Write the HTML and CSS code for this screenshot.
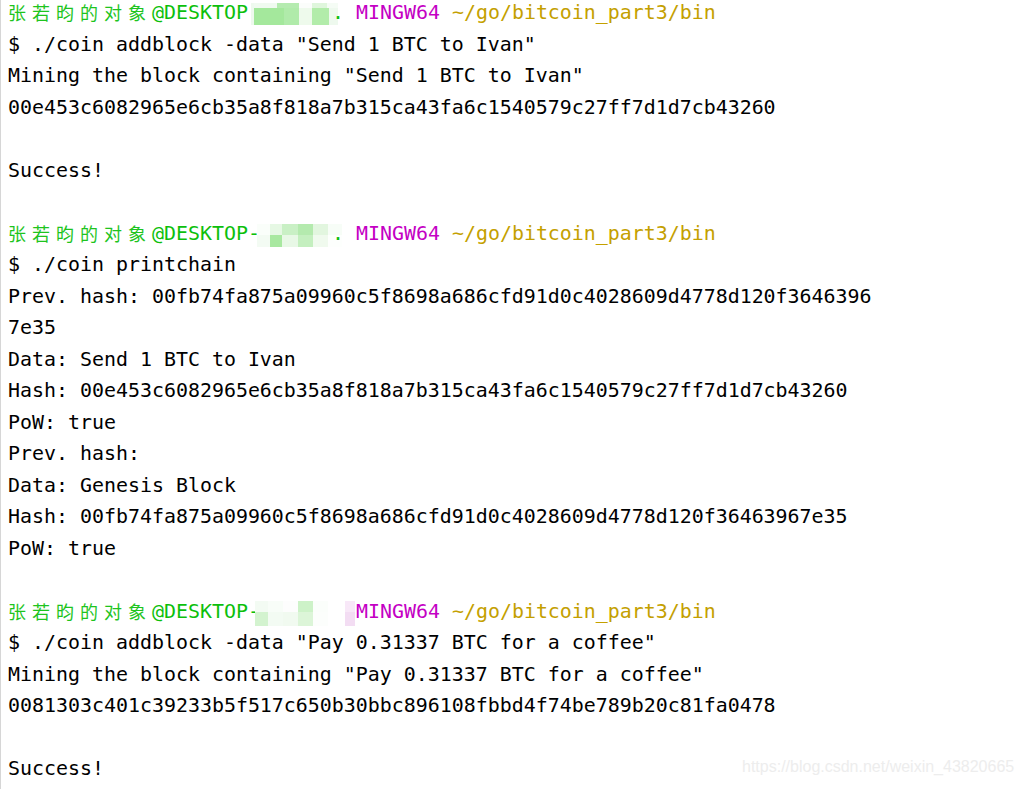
FILE: index.html
```html
<!DOCTYPE html>
<html lang="zh">
<head>
<meta charset="utf-8">
<title>MINGW64 terminal</title>
<link rel="stylesheet" href="styles.css">
</head>
<body>
<div class="term">
<pre class="out"><span class="user">张若昀的对象</span><span class="host">@DESKTOP</span><svg class="mosaic m1" width="87" height="22" viewBox="0 0 87 22"><rect x="0" y="0" width="3" height="22" fill="#eef9ee"/><rect x="3" y="0" width="23" height="5" fill="#f0faf0"/><rect x="26" y="0" width="22" height="5" fill="#b5ebb0"/><rect x="48" y="0" width="13" height="5" fill="#fbfdfb"/><rect x="61" y="0" width="15" height="5" fill="#dff6dc"/><rect x="76" y="0" width="11" height="5" fill="#f5fcf5"/><rect x="3" y="5" width="30" height="17" fill="#a4e89c"/><rect x="33" y="5" width="15" height="17" fill="#b0ebaa"/><rect x="48" y="5" width="13" height="17" fill="#eefaec"/><rect x="61" y="5" width="17" height="17" fill="#b2ecaa"/><rect x="78" y="5" width="9" height="17" fill="#eef9ee"/></svg><span class="host">. </span><span class="sys">MINGW64</span> <span class="path">~/go/bitcoin_part3/bin</span>
$ ./coin addblock -data "Send 1 BTC to Ivan"
Mining the block containing "Send 1 BTC to Ivan"
00e453c6082965e6cb35a8f818a7b315ca43fa6c1540579c27ff7d1d7cb43260

Success!

<span class="user">张若昀的对象</span><span class="host">@DESKTOP-</span><svg class="mosaic m3" width="85" height="23" viewBox="0 0 85 23"><rect x="0" y="0" width="13" height="11" fill="#fafefa"/><rect x="13" y="0" width="12" height="11" fill="#e6f8e4"/><rect x="25" y="0" width="16" height="11" fill="#c9f0c5"/><rect x="41" y="0" width="15" height="11" fill="#b4eaae"/><rect x="56" y="0" width="15" height="11" fill="#e2f6df"/><rect x="71" y="0" width="14" height="11" fill="#f7fdf7"/><rect x="0" y="11" width="13" height="12" fill="#f3fbf3"/><rect x="13" y="11" width="12" height="12" fill="#a8e8a0"/><rect x="25" y="11" width="16" height="12" fill="#e8f8e6"/><rect x="41" y="11" width="15" height="12" fill="#c4efbf"/><rect x="56" y="11" width="15" height="12" fill="#f0faee"/><rect x="71" y="11" width="14" height="12" fill="#fdfffd"/></svg><span class="host">. </span><span class="sys">MINGW64</span> <span class="path">~/go/bitcoin_part3/bin</span>
$ ./coin printchain
Prev. hash: 00fb74fa875a09960c5f8698a686cfd91d0c4028609d4778d120f3646396
7e35
Data: Send 1 BTC to Ivan
Hash: 00e453c6082965e6cb35a8f818a7b315ca43fa6c1540579c27ff7d1d7cb43260
PoW: true
Prev. hash:
Data: Genesis Block
Hash: 00fb74fa875a09960c5f8698a686cfd91d0c4028609d4778d120f36463967e35
PoW: true

<span class="user">张若昀的对象</span><span class="host">@DESKTOP-</span><svg class="mosaic m4" width="101" height="25" viewBox="0 0 101 25"><rect x="0" y="0" width="13" height="11" fill="#f3fbf3"/><rect x="13" y="0" width="15" height="11" fill="#f8fdf8"/><rect x="28" y="0" width="15" height="11" fill="#fdfdfd"/><rect x="43" y="0" width="15" height="11" fill="#cdf2c8"/><rect x="58" y="0" width="15" height="11" fill="#fbfefb"/><rect x="90" y="0" width="10" height="11" fill="#f8e8f8"/><rect x="0" y="11" width="13" height="14" fill="#d3f3cf"/><rect x="13" y="11" width="15" height="14" fill="#f3fbf3"/><rect x="28" y="11" width="15" height="14" fill="#f1faf0"/><rect x="43" y="11" width="15" height="14" fill="#dcf5d8"/><rect x="58" y="11" width="15" height="14" fill="#fcfefc"/><rect x="90" y="11" width="10" height="14" fill="#f3ddf3"/></svg><span class="sys">MINGW64</span> <span class="path">~/go/bitcoin_part3/bin</span>
$ ./coin addblock -data "Pay 0.31337 BTC for a coffee"
Mining the block containing "Pay 0.31337 BTC for a coffee"
0081303c401c39233b5f517c650b30bbc896108fbbd4f74be789b20c81fa0478

Success!</pre>
<div class="watermark">https://blog.csdn.net/weixin_43820665</div>
</div>
</body>
</html>
```

FILE: styles.css
```css
html, body {
  margin: 0;
  padding: 0;
  background: #ffffff;
}

body {
  width: 1022px;
  height: 789px;
  overflow: hidden;
}

.term {
  position: relative;
  width: 1022px;
  height: 789px;
  box-sizing: border-box;
  border-left: 1px solid #d6d6d6;
  overflow: hidden;
}

.out {
  margin: -3px 0 0 0;
  padding: 0 0 0 7px;
  font-family: "DejaVu Sans Mono", "Liberation Mono", monospace;
  font-size: 19.93px;
  line-height: 31.5px;
  color: #000000;
  white-space: pre;
}

.user {
  font-family: "Noto Sans CJK SC", sans-serif;
  font-size: 18px;
  letter-spacing: 6px;
  color: #1ec41e;
  display: inline-block;
  width: 144px;
  line-height: 31.5px;
  vertical-align: top;
}

.host {
  color: #0cbf0c;
}

.sys {
  color: #c400c4;
}

.path {
  color: #c4a000;
}

.mosaic {
  display: inline-block;
}

.m1 {
  margin-left: 3px;
  margin-right: -6px;
  vertical-align: -6px;
}

.m3 {
  margin-left: -3px;
  margin-right: -10px;
  vertical-align: -7px;
}

.m4 {
  margin-left: -5px;
  margin-right: 0;
  vertical-align: -8px;
}

.watermark {
  position: absolute;
  left: 741px;
  top: 758px;
  font-family: "Liberation Sans", Arial, sans-serif;
  font-size: 16px;
  color: #ededed;
}
```
